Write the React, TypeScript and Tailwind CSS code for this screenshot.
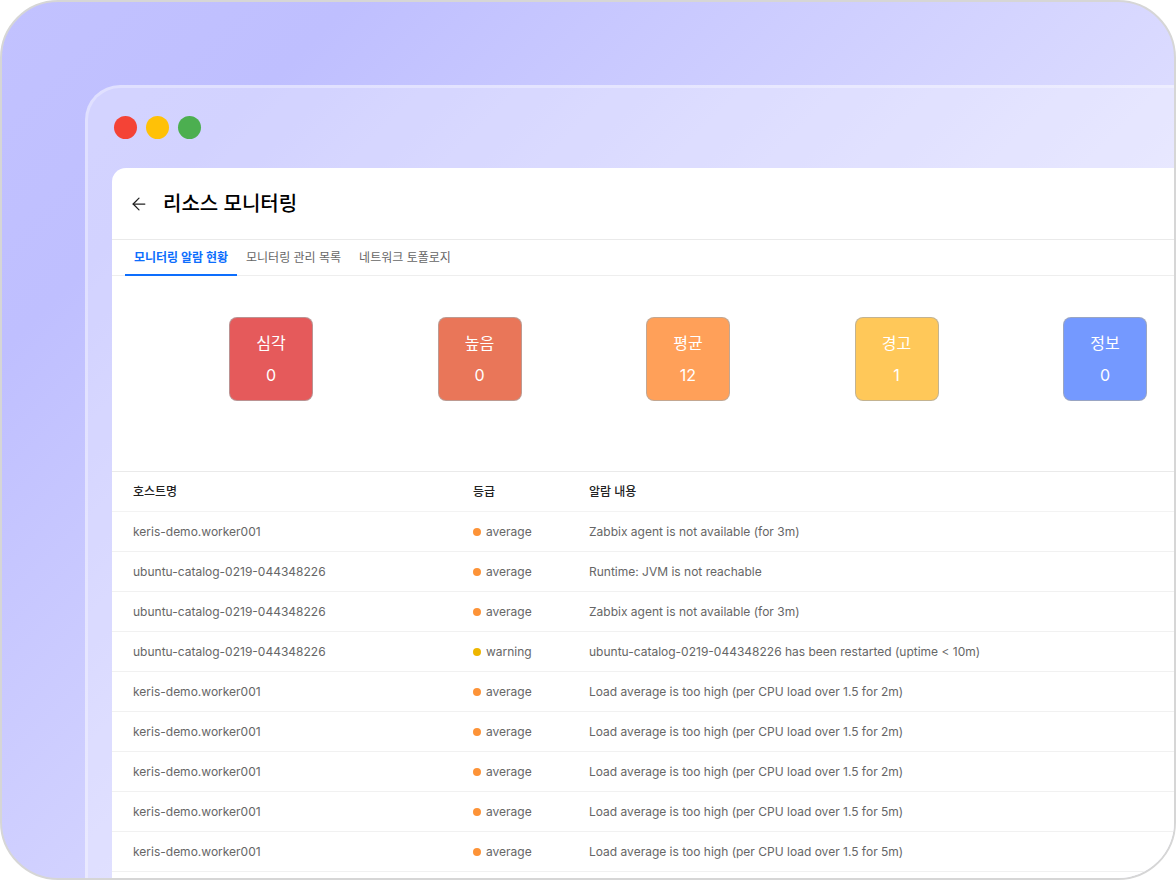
import { ArrowLeft } from 'lucide-react'
import clsx from 'clsx'

type Severity = 'average' | 'warning'

interface Alarm {
  host: string
  severity: Severity
  message: string
}

const tabs = ['모니터링 알람 현황', '모니터링 관리 목록', '네트워크 토폴로지']

const summary = [
  { label: '심각', count: 0, color: 'bg-[#e55a5b]' },
  { label: '높음', count: 0, color: 'bg-[#e97659]' },
  { label: '평균', count: 12, color: 'bg-[#ffa059]' },
  { label: '경고', count: 1, color: 'bg-[#ffc859]' },
  { label: '정보', count: 0, color: 'bg-[#7499ff]' },
]

const alarms: Alarm[] = [
  { host: 'keris-demo.worker001', severity: 'average', message: 'Zabbix agent is not available (for 3m)' },
  { host: 'ubuntu-catalog-0219-044348226', severity: 'average', message: 'Runtime: JVM is not reachable' },
  { host: 'ubuntu-catalog-0219-044348226', severity: 'average', message: 'Zabbix agent is not available (for 3m)' },
  {
    host: 'ubuntu-catalog-0219-044348226',
    severity: 'warning',
    message: 'ubuntu-catalog-0219-044348226 has been restarted (uptime < 10m)',
  },
  { host: 'keris-demo.worker001', severity: 'average', message: 'Load average is too high (per CPU load over 1.5 for 2m)' },
  { host: 'keris-demo.worker001', severity: 'average', message: 'Load average is too high (per CPU load over 1.5 for 2m)' },
  { host: 'keris-demo.worker001', severity: 'average', message: 'Load average is too high (per CPU load over 1.5 for 2m)' },
  { host: 'keris-demo.worker001', severity: 'average', message: 'Load average is too high (per CPU load over 1.5 for 5m)' },
  { host: 'keris-demo.worker001', severity: 'average', message: 'Load average is too high (per CPU load over 1.5 for 5m)' },
]

const severityColor: Record<Severity, string> = {
  average: 'bg-[#fd9337]',
  warning: 'bg-[#eeb600]',
}

function WindowDots() {
  return (
    <div className="flex gap-[9px] pt-7 pb-[29px] pl-[2px]" aria-hidden="true">
      <span className="size-[23px] rounded-full bg-[#f44336]" />
      <span className="size-[23px] rounded-full bg-[#ffc107]" />
      <span className="size-[23px] rounded-full bg-[#4caf50]" />
    </div>
  )
}

function Tabs() {
  return (
    <div role="tablist" className="flex h-9 border-b border-[#eeeeee] pl-[13px]">
      {tabs.map((tab, i) => (
        <button
          key={tab}
          type="button"
          role="tab"
          aria-selected={i === 0}
          className={clsx(
            'h-9 border-b-2 px-[9px] pt-[2px] text-xs whitespace-nowrap',
            i === 0 ? 'border-[#0d6efd] font-bold text-[#0d6efd]' : 'border-transparent text-[#666666]',
          )}
        >
          {tab}
        </button>
      ))}
    </div>
  )
}

function SummaryCards() {
  return (
    <div className="flex justify-between pt-[41px] pr-[27px] pb-[70px] pl-[117px]">
      {summary.map(({ label, count, color }) => (
        <div
          key={label}
          className={clsx(
            'flex size-[84px] flex-col items-center justify-center gap-2 rounded-lg border border-[#aaaaaa]/70 text-base text-white',
            color,
          )}
        >
          <span>{label}</span>
          <span>{count}</span>
        </div>
      ))}
    </div>
  )
}

function AlarmTable() {
  return (
    <table className="w-full table-fixed border-collapse border-t border-[#eaeaea] text-left text-xs">
      <thead>
        <tr className="h-10 border-b border-[#f3f3f3] text-[#222222]">
          <th className="w-[361px] pl-[21px] font-medium">호스트명</th>
          <th className="w-[116px] font-medium">등급</th>
          <th className="font-medium">알람 내용</th>
        </tr>
      </thead>
      <tbody>
        {alarms.map(({ host, severity, message }, i) => (
          <tr key={i} className="h-10 border-b border-[#f1f1f1] text-[#666666]">
            <td className="pl-[21px]">{host}</td>
            <td>
              <span className="flex items-center gap-[5px]">
                <span className={clsx('size-2 rounded-full', severityColor[severity])} />
                {severity}
              </span>
            </td>
            <td>{message}</td>
          </tr>
        ))}
      </tbody>
    </table>
  )
}

export default function App() {
  return (
    <div className="flex h-screen overflow-hidden rounded-[58px] border-2 border-[#d6d6d6] bg-[linear-gradient(135deg,#c2c2ff_0%,#bfbfff_17%,#f4f4ff_100%)] pt-[83px] pl-[83px] font-[Inter,'Noto_Sans_CJK_KR',sans-serif]">
      <div className="min-w-0 flex-1 rounded-tl-[35px] border-t-[3px] border-l-[3px] border-white/30 bg-white/30 pl-6">
        <WindowDots />
        <main className="min-h-full rounded-tl-[14px] bg-white">
          <header className="flex h-[72px] items-center gap-[14px] border-b border-[#eaeaea] pl-[17px]">
            <button type="button" aria-label="뒤로" className="text-[#222222]">
              <ArrowLeft size={20} strokeWidth={1.5} />
            </button>
            <h1 className="text-xl font-medium text-black">리소스 모니터링</h1>
          </header>
          <Tabs />
          <SummaryCards />
          <AlarmTable />
        </main>
      </div>
    </div>
  )
}
